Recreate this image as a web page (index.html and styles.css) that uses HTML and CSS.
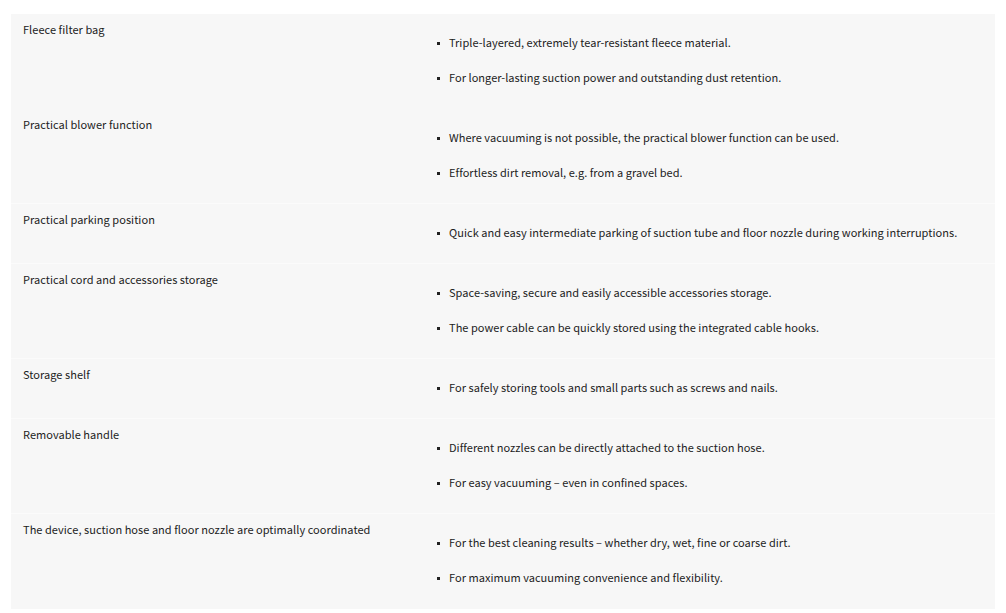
FILE: index.html
```html
<!DOCTYPE html>
<html lang="en">
<head>
<meta charset="utf-8">
<link rel="stylesheet" href="styles.css">
</head>
<body>
<div class="features">
  <div class="row">
    <div class="title">Fleece filter bag</div>
    <ul class="points">
      <li>Triple-layered, extremely tear-resistant fleece material.</li>
      <li>For longer-lasting suction power and outstanding dust retention.</li>
    </ul>
  </div>
  <div class="row">
    <div class="title">Practical blower function</div>
    <ul class="points">
      <li>Where vacuuming is not possible, the practical blower function can be used.</li>
      <li>Effortless dirt removal, e.g. from a gravel bed.</li>
    </ul>
  </div>
  <div class="row sep">
    <div class="title">Practical parking position</div>
    <ul class="points">
      <li>Quick and easy intermediate parking of suction tube and floor nozzle during working interruptions.</li>
    </ul>
  </div>
  <div class="row sep">
    <div class="title">Practical cord and accessories storage</div>
    <ul class="points">
      <li>Space-saving, secure and easily accessible accessories storage.</li>
      <li>The power cable can be quickly stored using the integrated cable hooks.</li>
    </ul>
  </div>
  <div class="row sep">
    <div class="title">Storage shelf</div>
    <ul class="points">
      <li>For safely storing tools and small parts such as screws and nails.</li>
    </ul>
  </div>
  <div class="row sep">
    <div class="title">Removable handle</div>
    <ul class="points">
      <li>Different nozzles can be directly attached to the suction hose.</li>
      <li>For easy vacuuming – even in confined spaces.</li>
    </ul>
  </div>
  <div class="row sep">
    <div class="title">The device, suction hose and floor nozzle are optimally coordinated</div>
    <ul class="points">
      <li>For the best cleaning results – whether dry, wet, fine or coarse dirt.</li>
      <li>For maximum vacuuming convenience and flexibility.</li>
    </ul>
  </div>
</div>
</body>
</html>
```

FILE: styles.css
```css
html, body {
  margin: 0;
  padding: 0;
  background: #ffffff;
}

body {
  padding: 14px 11px 0 11px;
  font-family: "Noto Sans CJK KR", "Noto Sans", sans-serif;
  font-size: 11px;
  letter-spacing: 0.04px;
  color: #222222;
}

.features {
  background: #f7f7f7;
}

.row {
  display: grid;
  grid-template-columns: 414px 1fr;
}

.row.sep {
  border-top: 1px solid #fbfbfb;
  margin-top: -1px;
}

.title {
  padding: 7px 12px 0 12px;
  line-height: 16px;
}

.points {
  list-style: none;
  margin: 0;
  padding: 20px 0 24px 0;
}

.points li {
  position: relative;
  line-height: 16px;
  padding-left: 24px;
  margin-bottom: 19px;
}

.points li:last-child {
  margin-bottom: 0;
}

.points li::before {
  content: "";
  position: absolute;
  left: 12px;
  top: 8px;
  width: 3px;
  height: 3px;
  background: #222222;
}
```
